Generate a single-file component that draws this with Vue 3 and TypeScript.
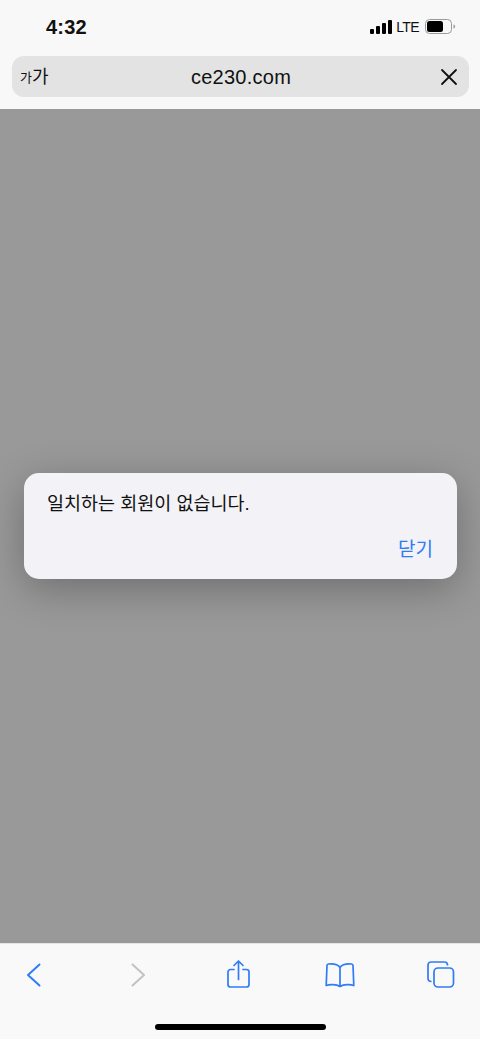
<script setup lang="ts">
const message = '일치하는 회원이 없습니다.'
const closeLabel = '닫기'
const bars = [
  { x: 0, y: 9, h: 5 },
  { x: 6, y: 6, h: 8 },
  { x: 12, y: 3, h: 11 },
  { x: 18, y: 0, h: 14 },
]
</script>

<template>
  <div class="phone">
    <header class="top">
      <div class="status">
        <span class="time">4:32</span>
        <div class="indicators">
          <svg class="signal" width="22" height="14" viewBox="0 0 22 14">
            <rect v-for="b in bars" :key="b.x" :x="b.x" :y="b.y" width="4" :height="b.h" rx="1" fill="#000" />
          </svg>
          <span class="lte">LTE</span>
          <svg class="battery" width="31" height="15" viewBox="0 0 31 15">
            <rect x="0.5" y="0.5" width="26" height="14" rx="4" fill="none" stroke="#9a9a9a" />
            <rect x="2" y="2" width="16" height="11" rx="2.5" fill="#000" />
            <path d="M28.5 5.5c1.2.4 1.6 1.1 1.6 2s-.4 1.6-1.6 2z" fill="#9a9a9a" />
          </svg>
        </div>
      </div>
      <div class="url-bar">
        <span class="aa"><span class="aa-small">가</span>가</span>
        <span class="domain">ce230.com</span>
        <svg class="close" width="18" height="18" viewBox="0 0 18 18">
          <path d="M2 2l14 14M16 2L2 16" stroke="#111" stroke-width="1.8" stroke-linecap="round" fill="none" />
        </svg>
      </div>
    </header>

    <main class="overlay">
      <div class="dialog">
        <p class="message">{{ message }}</p>
        <div class="actions">
          <span class="action">{{ closeLabel }}</span>
        </div>
      </div>
    </main>

    <footer class="toolbar">
      <nav class="tools">
        <svg class="tool" width="32" height="30" viewBox="0 0 32 30">
          <path d="M21.5 4.5L10 15l11.5 10.5" stroke="#2f7cf6" stroke-width="2" stroke-linecap="round" stroke-linejoin="round" fill="none" />
        </svg>
        <svg class="tool" width="32" height="30" viewBox="0 0 32 30">
          <path d="M12.5 4.5L24 15 12.5 25.500" stroke="#c2c2c2" stroke-width="2" stroke-linecap="round" stroke-linejoin="round" fill="none" />
        </svg>
        <svg class="tool" width="32" height="30" viewBox="0 0 32 30">
          <path d="M12 9.500H8.500a2.500 2.500 0 0 0-2.500 2.500v12.500a2.500 2.500 0 0 0 2.500 2.500h16a2.500 2.500 0 0 0 2.500-2.500V12a2.500 2.500 0 0 0-2.500-2.500H21" stroke="#2f7cf6" stroke-width="1.700" stroke-linecap="round" fill="none" />
          <path d="M16.500 19.500V1.500M12 5.500L16.500 1 21 5.500" stroke="#2f7cf6" stroke-width="1.700" stroke-linecap="round" stroke-linejoin="round" fill="none" />
        </svg>
        <svg class="tool" width="32" height="30" viewBox="0 0 32 30">
          <path d="M17 7.500C15 4.500 11 3.500 5.500 4c-1 .1-1.500.7-1.500 1.500L3.200 25.500c3.500-1.300 10-1.500 13.800 1 3.800-2.500 10.300-2.300 13.800-1L30 5.500c0-.8-.5-1.400-1.500-1.500C23 3.500 19 4.500 17 7.500zm0 0v19" stroke="#2f7cf6" stroke-width="1.700" stroke-linejoin="round" fill="none" />
        </svg>
        <svg class="tool" width="32" height="30" viewBox="0 0 32 30">
          <path d="M6.500 21.500h-.5A3 3 0 0 1 3 18.500V5a3 3 0 0 1 3-3h13.500a3 3 0 0 1 3 3v.5" stroke="#2f7cf6" stroke-width="1.700" fill="none" />
          <rect x="9" y="8" width="19.500" height="19" rx="4" stroke="#2f7cf6" stroke-width="1.700" fill="none" />
        </svg>
      </nav>
      <div class="home-indicator"></div>
    </footer>
  </div>
</template>

<style scoped>
.phone {
  width: 480px;
  height: 1039px;
  display: flex;
  flex-direction: column;
  overflow: hidden;
  font-family: "Liberation Sans", "Noto Sans CJK KR", sans-serif;
  background: #f8f8f8;
}

.top {
  height: 109px;
  flex: none;
  background: #f8f8f8;
  padding: 0 11px 0 12px;
  box-sizing: border-box;
}

.status {
  height: 56px;
  display: flex;
  align-items: center;
  justify-content: space-between;
  padding: 0 13px 2px 34px;
  box-sizing: border-box;
}

.time {
  font-size: 20px;
  font-weight: 700;
  color: #111;
  letter-spacing: 0.2px;
}

.indicators {
  display: flex;
  align-items: center;
  margin-top: -1px;
}

.signal {
  margin-right: 4px;
}

.lte {
  font-size: 14px;
  color: #111;
  margin-right: 6px;
  letter-spacing: -0.6px;
  font-family: "Liberation Sans", sans-serif;
}

.url-bar {
  height: 41px;
  background: #e3e3e3;
  border-radius: 12px;
  display: flex;
  align-items: center;
  justify-content: space-between;
  padding: 0 11px 0 8px;
}

.aa {
  font-size: 18px;
  line-height: 20px;
  color: #111;
  width: 64px;
  margin-top: 1px;
}

.aa-small {
  font-size: 13px;
  vertical-align: 1px;
}

.domain {
  font-size: 20px;
  color: #111;
  letter-spacing: 0.25px;
  margin-top: 1px;
}

.close {
  margin-left: 42px;
}

.overlay {
  flex: 1;
  background: #999;
  display: flex;
  align-items: center;
  justify-content: center;
}

.dialog {
  width: 433px;
  height: 106px;
  margin-left: 1px;
  box-sizing: border-box;
  background: #f2f2f7;
  border-radius: 15px;
  padding: 18px 24px 0 23px;
  box-shadow: 0 10px 40px rgba(0, 0, 0, 0.28);
}

.message {
  margin: 0;
  font-size: 18.5px;
  line-height: 26px;
  color: #111;
}

.actions {
  display: flex;
  justify-content: flex-end;
  margin-top: 20px;
}

.action {
  font-size: 19px;
  line-height: 26px;
  color: #2f7cf6;
}

.toolbar {
  height: 96px;
  flex: none;
  background: #f9f9f9;
  box-sizing: border-box;
  border-top: 1px solid #e4e4e4;
  padding-top: 16px;
}

.tools {
  display: flex;
  justify-content: space-between;
  padding: 0 23px 0 18px;
}

.tool {
  display: block;
}

.home-indicator {
  width: 171px;
  height: 6px;
  margin: 34px 0 0 155px;
  background: #000;
  border-radius: 3px;
}
</style>
